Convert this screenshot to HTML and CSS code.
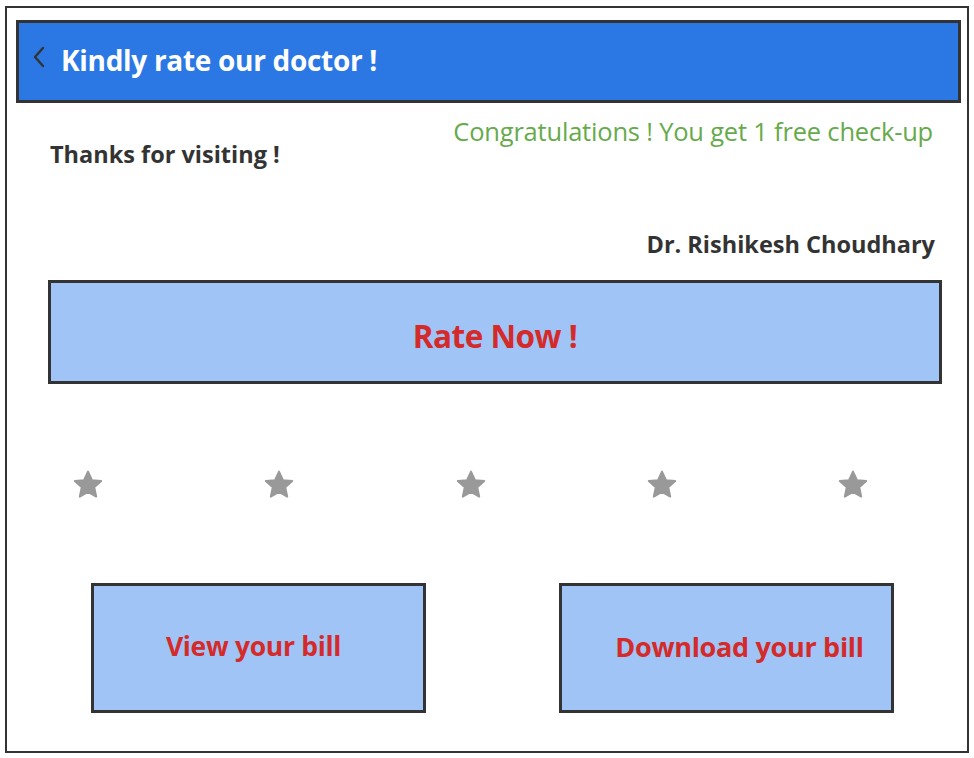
FILE: index.html
```html
<!DOCTYPE html>
<html lang="en">
<head>
<meta charset="utf-8">
<title>Rate doctor</title>
<link rel="stylesheet" href="styles.css">
</head>
<body>
<div class="frame">
  <header class="topbar">
    <svg class="back" width="14" height="22" viewBox="0 0 14 22"><path d="M11 2 L3 11 L11 20" fill="none" stroke="#333" stroke-width="2.4" stroke-linecap="round" stroke-linejoin="round"/></svg>
    <h1 class="title">Kindly rate our doctor !</h1>
  </header>
  <div class="info">
    <p class="thanks">Thanks for visiting !</p>
    <p class="congrats">Congratulations ! You get 1 free check-up</p>
  </div>
  <p class="doctor">Dr. Rishikesh Choudhary</p>
  <div class="rate">Rate Now !</div>
  <div class="stars">
    <svg class="star" viewBox="0 0 24 24"><path d="M12 2.5 L14.8 8.6 L21.3 9.2 L16.4 13.6 L17.8 20.2 L12 16.8 L6.2 20.2 L7.6 13.6 L2.7 9.2 L9.2 8.6 Z" fill="#999" stroke="#999" stroke-width="1.4" stroke-linejoin="round"/></svg>
    <svg class="star" viewBox="0 0 24 24"><path d="M12 2.5 L14.8 8.6 L21.3 9.2 L16.4 13.6 L17.8 20.2 L12 16.8 L6.2 20.2 L7.6 13.6 L2.7 9.2 L9.2 8.6 Z" fill="#999" stroke="#999" stroke-width="1.4" stroke-linejoin="round"/></svg>
    <svg class="star" viewBox="0 0 24 24"><path d="M12 2.5 L14.8 8.6 L21.3 9.2 L16.4 13.6 L17.8 20.2 L12 16.8 L6.2 20.2 L7.6 13.6 L2.7 9.2 L9.2 8.6 Z" fill="#999" stroke="#999" stroke-width="1.4" stroke-linejoin="round"/></svg>
    <svg class="star" viewBox="0 0 24 24"><path d="M12 2.5 L14.8 8.6 L21.3 9.2 L16.4 13.6 L17.8 20.2 L12 16.8 L6.2 20.2 L7.6 13.6 L2.7 9.2 L9.2 8.6 Z" fill="#999" stroke="#999" stroke-width="1.4" stroke-linejoin="round"/></svg>
    <svg class="star" viewBox="0 0 24 24"><path d="M12 2.5 L14.8 8.6 L21.3 9.2 L16.4 13.6 L17.8 20.2 L12 16.8 L6.2 20.2 L7.6 13.6 L2.7 9.2 L9.2 8.6 Z" fill="#999" stroke="#999" stroke-width="1.4" stroke-linejoin="round"/></svg>
  </div>
  <div class="actions">
    <div class="btn btn-view">View your bill</div>
    <div class="btn btn-download">Download your bill</div>
  </div>
</div>
</body>
</html>
```
FILE: styles.css
```css
* { box-sizing: border-box; }
html, body { margin: 0; padding: 0; background: #fff; }
body {
  font-family: "Open Sans", "Noto Sans", sans-serif;
  color: #333;
  width: 974px;
  height: 758px;
  overflow: hidden;
}
.frame {
  margin: 6px 0 0 5px;
  width: 964px;
  height: 747px;
  border: 2.5px solid #333;
  padding: 12px 6px 0 9px;
  display: flex;
  flex-direction: column;
}
.frame > * { flex-shrink: 0; }
.topbar {
  height: 83px;
  background: #2b78e4;
  border: 3px solid #333;
  display: flex;
  align-items: center;
  padding: 0 0 0 13px;
  gap: 15px;
}
.back { margin-top: -10px; flex: none; }
.title {
  margin: -3px 0 0 0;
  color: #fff;
  font-size: 28px;
  font-weight: 700;
  letter-spacing: -0.3px;
}
.info {
  display: flex;
  justify-content: space-between;
  align-items: flex-start;
  padding: 0 28px 0 34px;
  height: 80px;
}
.thanks {
  margin: 35px 0 0 0;
  font-size: 23.5px;
  font-weight: 700;
  color: #333;
  line-height: 32px;
}
.congrats {
  margin: 12px 0 0 0;
  font-size: 25.5px;
  color: #66aa4c;
  letter-spacing: -0.2px;
  line-height: 32px;
}
.doctor {
  margin: 45px 26px 0 0;
  text-align: right;
  font-size: 23.5px;
  font-weight: 700;
  color: #333;
  line-height: 32px;
}
.rate {
  margin: 20px 19px 0 32px;
  height: 104px;
  padding-top: 6px;
  background: #a0c4f6;
  border: 3px solid #333;
  display: flex;
  align-items: center;
  justify-content: center;
  color: #d42a2a;
  font-size: 31.5px;
  font-weight: 700;
  letter-spacing: -0.5px;
}
.stars {
  display: flex;
  justify-content: space-between;
  padding: 0 91px 0 55px;
  margin-top: 84px;
  height: 34px;
}
.star { width: 34px; height: 34px; }
.actions {
  display: flex;
  gap: 133px;
  padding: 0 0 0 75px;
  margin-top: 81px;
}
.btn {
  width: 335px;
  height: 130px;
  padding-bottom: 4px;
  background: #a0c4f6;
  border: 3px solid #333;
  display: flex;
  align-items: center;
  justify-content: center;
  color: #d42a2a;
  font-size: 26.5px;
  font-weight: 700;
  letter-spacing: -0.3px;
}
.btn-view { padding-right: 10px; }
.btn-download { padding-left: 26px; font-size: 27px; }
```
